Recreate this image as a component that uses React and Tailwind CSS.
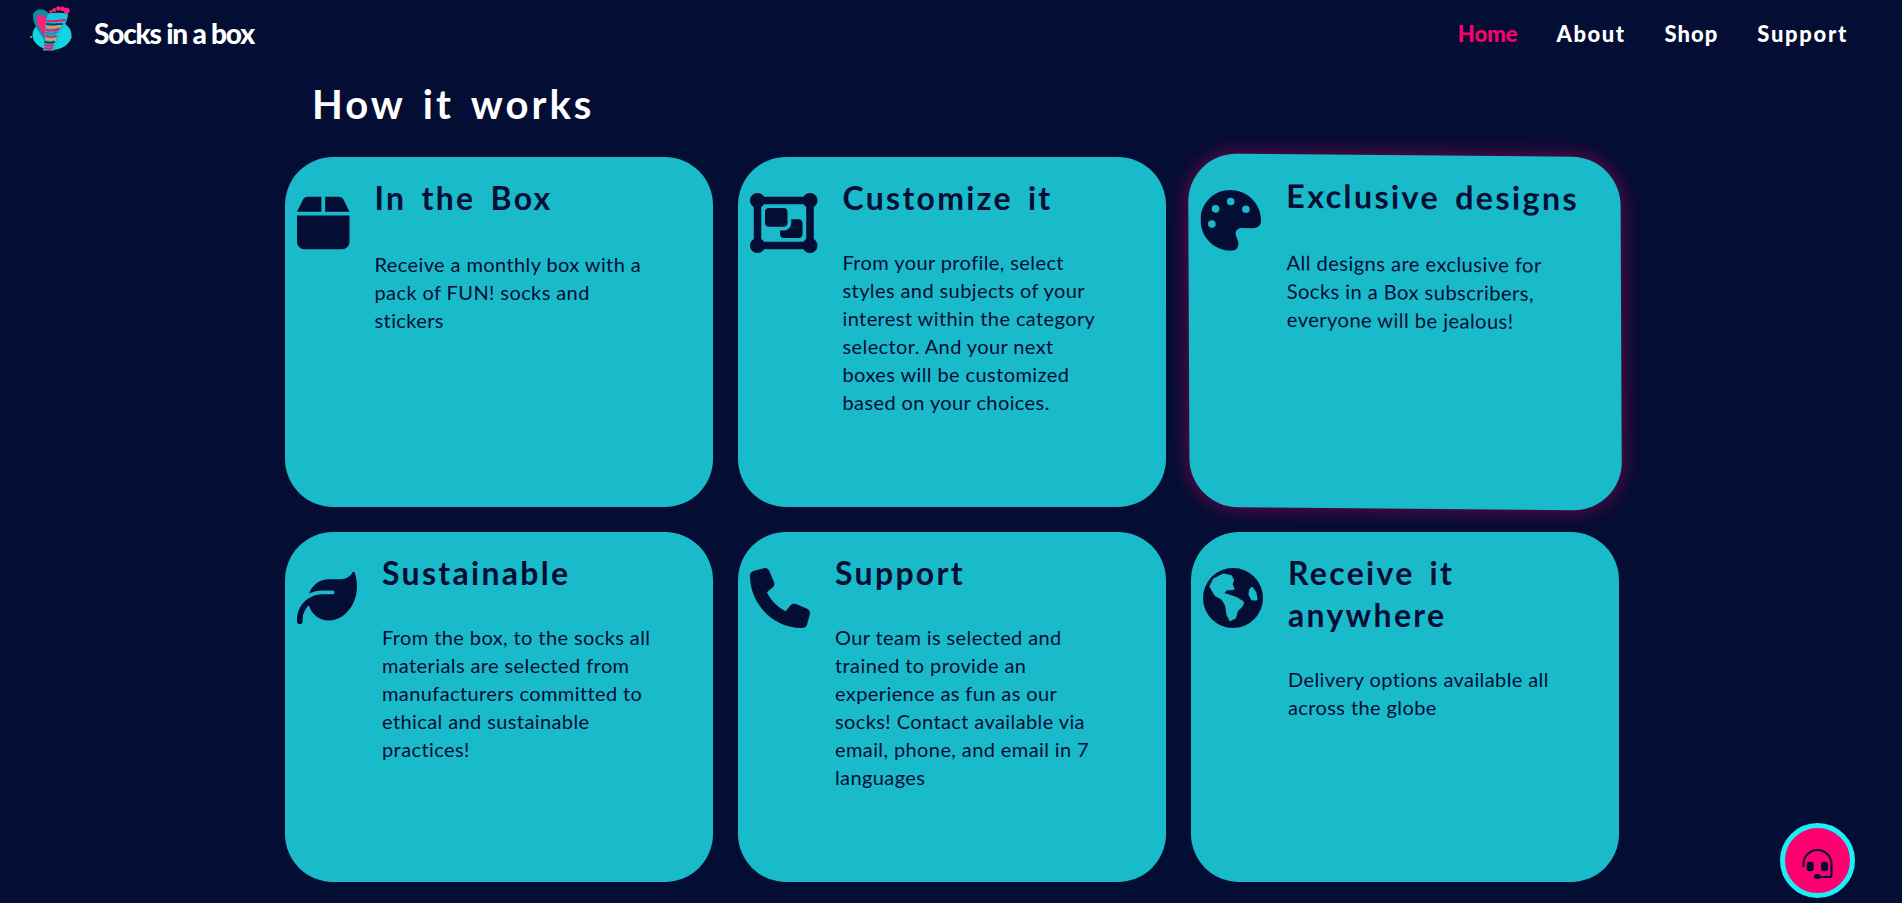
import React from 'react';
import { FaBox, FaObjectGroup, FaPalette, FaLeaf, FaPhone } from 'react-icons/fa6';

function GlobeIcon({ className }) {
  return (
    <svg viewBox="0 0 60 60" className={className}>
      <circle cx="30" cy="30" r="30" fill="#040d33" />
      <g fill="#19bbcb" stroke="#19bbcb" strokeWidth="3" strokeLinejoin="round">
        <path d="M8 18.500L11.500 11.500L20.500 7L27.500 8.500L29.500 12L28 16.500L30 20.500L23 21L20 24.500L21 26.500L27.500 28.500L34 31L39.500 34.500L38.500 37.500L33.500 42.500L31.500 49.500L27.500 51.500L25 46.500L23.500 37L19.500 30.500L13 27L8 18.500Z" />
        <path d="M49 20.500L52 25L53 31L49.500 31L47 26.500L47.500 22Z" />
      </g>
    </svg>
  );
}

const cards = [
  { Icon: FaBox, iconClass: 'w-[52.5px]', bodyClass: 'mt-[31px]', title: ['In the Box'], lines: ['Receive a monthly box with a', 'pack of FUN! socks and', 'stickers'] },
  { Icon: FaObjectGroup, iconClass: 'w-[67.5px]', bodyClass: 'mt-[29px]', title: ['Customize it'], lines: ['From your profile, select', 'styles and subjects of your', 'interest within the category', 'selector. And your next', 'boxes will be customized', 'based on your choices.'] },
  { Icon: FaPalette, iconClass: 'w-[60px]', bodyClass: 'mt-[31px]', title: ['Exclusive designs'], lines: ['All designs are exclusive for', 'Socks in a Box subscribers,', 'everyone will be jealous!'], featured: true },
  { Icon: FaLeaf, iconClass: 'w-[60px]', bodyClass: 'mt-[29px]', title: ['Sustainable'], lines: ['From the box, to the socks all', 'materials are selected from', 'manufacturers committed to', 'ethical and sustainable', 'practices!'] },
  { Icon: FaPhone, iconClass: 'w-[60px]', bodyClass: 'mt-[29px]', title: ['Support'], lines: ['Our team is selected and', 'trained to provide an', 'experience as fun as our', 'socks! Contact available via', 'email, phone, and email in 7', 'languages'] },
  { Icon: GlobeIcon, iconClass: 'w-[60px]', bodyClass: 'mt-[29px]', title: ['Receive it', 'anywhere'], lines: ['Delivery options available all', 'across the globe'] },
];

function Logo() {
  return (
    <svg viewBox="0 0 44 45" className="w-[44px] h-[45px] -mt-[10px]">
      <ellipse cx="22" cy="29" rx="19.500" ry="15" fill="#14d4e0" />
      <path d="M3 9C4 4 10 2 16 5c3 2 4 6 5 10l3 18-9 3C12 28 2 19 3 9z" fill="#0c8ea6" />
      <path d="M7 12c2-5 8-4 9 1l3 16-4 3C12 25 6 19 7 12z" fill="#ff1f7a" />
      <path d="M18 7.500c6-1 14-1 20 0 0 6-3 11-6 17-3 6-4 13-8 20H13c2-7 2-14 2-19 0-7 1-13 3-18z" fill="#14c8da" />
      <g fill="none" strokeWidth="2" strokeLinecap="round">
        <path d="M17 15c5 1 11 0 18-1" stroke="#ff0f70" />
        <path d="M17 18c5 1 10 0 15 0" stroke="#0b3f6b" />
        <path d="M17 21c5 1 9 0 13-1" stroke="#f59f2a" />
        <path d="M16 24c5 1 9 1 13-1" stroke="#ff0f70" />
        <path d="M16 27c4 1 8 1 11-1" stroke="#0e96ad" />
        <path d="M16 30c4 1 7 1 10 0" stroke="#ff0f70" />
        <path d="M16 33c4 1 6 1 9 0" stroke="#f59f2a" />
        <path d="M15 36c4 1 6 1 9 0" stroke="#0b3f6b" />
        <path d="M15 39c3 1 6 1 8 0" stroke="#ff0f70" />
        <path d="M15 42c3 1 5 1 7 0" stroke="#ff0f70" />
      </g>
      <circle cx="36.700" cy="4.700" r="3" fill="#ff1f7a" />
      <circle cx="32.500" cy="3" r="2.400" fill="#ff1f7a" />
      <circle cx="28.300" cy="2.500" r="2.300" fill="#ff1f7a" />
      <circle cx="24.300" cy="4" r="2" fill="#ff1f7a" />
      <circle cx="21" cy="5.700" r="1.700" fill="#ff1f7a" />
      <circle cx="1" cy="31" r="1" fill="#f59f2a" />
      <circle cx="41" cy="31.500" r="0.800" fill="#f59f2a" />
    </svg>
  );
}

function HeadsetIcon() {
  return (
    <svg viewBox="0 0 31 31" className="w-[31px] h-[31px] mt-[7px]" fill="none" stroke="#040d33" strokeWidth="2" strokeLinecap="round">
      <path d="M1.500 17v-2a14 14 0 0 1 28 0v11a2 2 0 0 1-2 2h-9" />
      <rect x="4.700" y="12.700" width="7" height="9.500" rx="3" fill="#040d33" stroke="none" />
      <rect x="19" y="12.700" width="7" height="9.500" rx="3" fill="#040d33" stroke="none" />
      <rect x="12" y="25" width="6.500" height="5" rx="2.500" fill="#040d33" stroke="none" />
    </svg>
  );
}

function Card({ card }) {
  const { Icon, iconClass, bodyClass, title, lines, featured } = card;
  return (
    <div className={`h-[350px] rounded-[48px] bg-[#19bbcb] pl-[12px] pt-5 flex gap-[25px] text-[#040d33] ${featured ? 'scale-[1.01] skew-x-[0.25deg] skew-y-[0.5deg] shadow-[0_0_20px_rgba(255,0,110,0.45)]' : ''}`}>
      <Icon className={`${iconClass} h-[60px] mt-4 shrink-0`} />
      <div>
        <h2 className="text-[32px] leading-[42px] font-bold tracking-[2.3px] [word-spacing:5px]">
          {title.map((t) => <div key={t} className="whitespace-nowrap">{t}</div>)}
        </h2>
        <p className={`${bodyClass} text-[20px] leading-7 tracking-[0.4px]`}>
          {lines.map((l) => <span key={l} className="block whitespace-nowrap">{l}</span>)}
        </p>
      </div>
    </div>
  );
}

export default function App() {
  return (
    <div className="relative h-screen overflow-hidden bg-[#040d33] font-['Lato',sans-serif]">
      <nav className="h-[66px] flex items-center justify-between pl-[30px] pr-[54px]">
        <div className="flex items-center gap-[20px]">
          <Logo />
          <span className="text-white text-[28px] font-black tracking-[-1.2px]">Socks in a box</span>
        </div>
        <div className="flex gap-[39px] text-[22px] font-black tracking-[1.5px] text-white">
          <a className="text-[#ff0070] tracking-[0px]">Home</a>
          <a>About</a>
          <a className="tracking-[1px]">Shop</a>
          <a className="tracking-[1.7px]">Support</a>
        </div>
      </nav>
      <h1 className="ml-[312px] text-white text-[40px] leading-[50px] font-bold tracking-[3px] [word-spacing:5px] mt-[13px]">How it works</h1>
      <div className="w-[1334px] ml-[285px] mt-[28px] grid grid-cols-3 gap-[25px]">
        {cards.map((c) => <Card key={c.title[0]} card={c} />)}
      </div>
      <button className="absolute right-[47px] bottom-[5px] w-[75px] h-[75px] rounded-full bg-[#ff0070] border-[5px] border-[#19f0f5] flex items-center justify-center">
        <HeadsetIcon />
      </button>
    </div>
  );
}
